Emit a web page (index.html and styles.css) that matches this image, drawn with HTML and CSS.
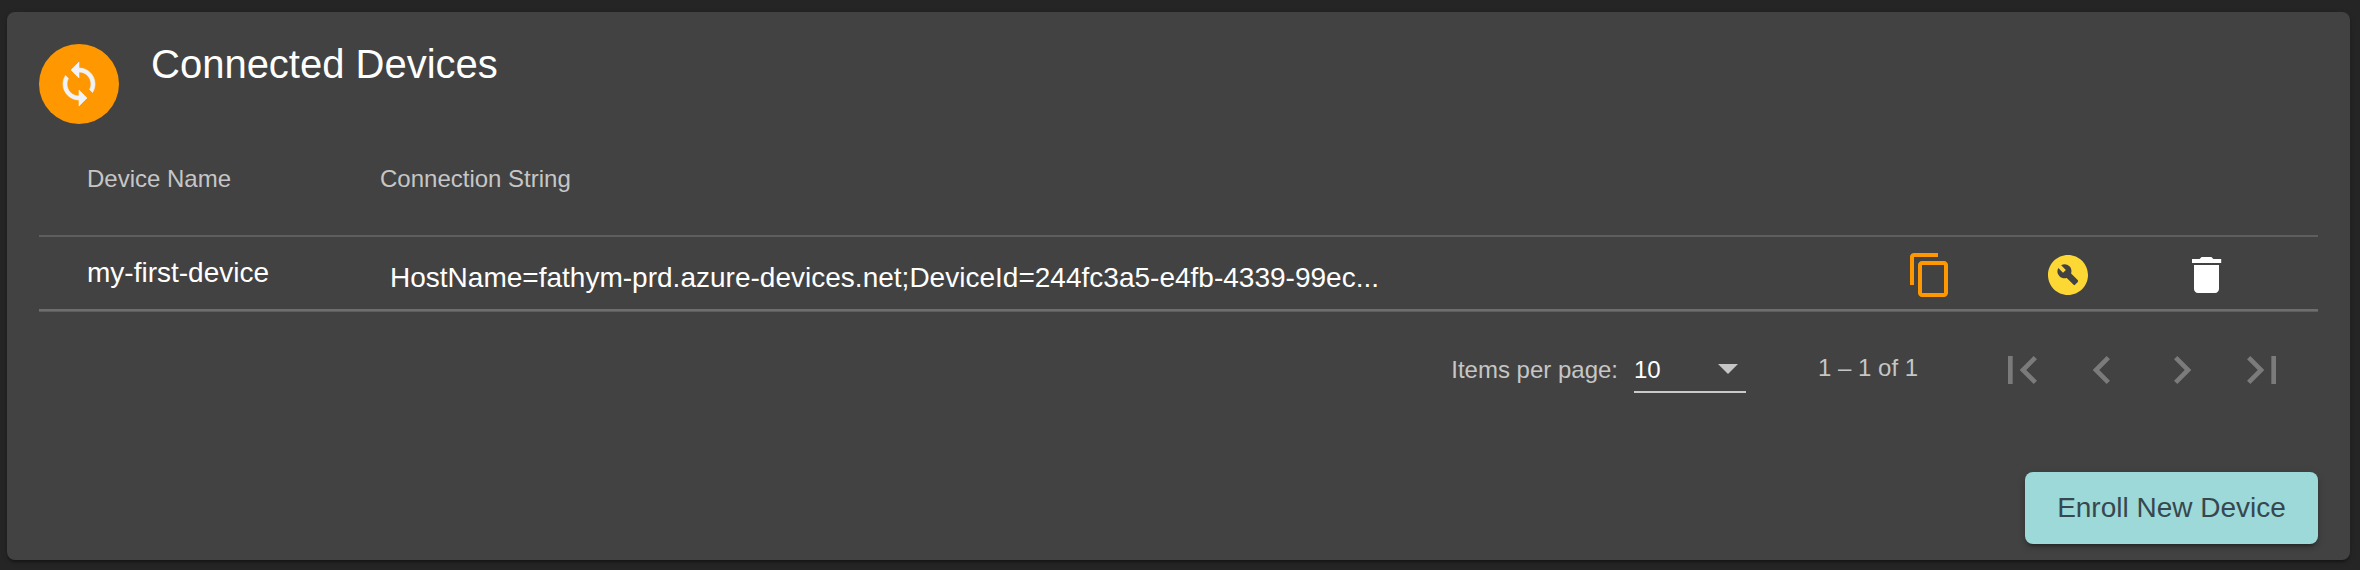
FILE: index.html
```html
<!DOCTYPE html>
<html lang="en">
<head>
<meta charset="utf-8">
<title>Connected Devices</title>
<link rel="stylesheet" href="styles.css">
</head>
<body>
<main class="card">
  <header class="card-header">
    <div class="avatar">
      <svg width="48" height="48" viewBox="0 0 24 24"><path d="M12 4V1L8 5l4 4V6c3.31 0 6 2.69 6 6 0 1.01-.25 1.97-.7 2.8l1.46 1.46C19.54 15.03 20 13.57 20 12c0-4.42-3.58-8-8-8zm0 14c-3.31 0-6-2.69-6-6 0-1.01.25-1.97.7-2.8L5.24 7.74C4.46 8.97 4 10.43 4 12c0 4.42 3.58 8 8 8v3l4-4-4-4v3z"/></svg>
    </div>
    <h1 class="title">Connected Devices</h1>
  </header>
  <div class="row row-head">
    <span class="col-name">Device Name</span>
    <span class="col-conn">Connection String</span>
  </div>
  <div class="row row-item">
    <span class="col-name">my-first-device</span>
    <span class="col-conn">HostName=fathym-prd.azure-devices.net;DeviceId=244fc3a5-e4fb-4339-99ec...</span>
    <div class="actions">
      <svg class="copy" width="48" height="48" viewBox="0 0 24 24"><path d="M16 1H4c-1.1 0-2 .9-2 2v14h2V3h12V1zm3 4H8c-1.1 0-2 .9-2 2v14c0 1.1.9 2 2 2h11c1.1 0 2-.9 2-2V7c0-1.1-.9-2-2-2zm0 16H8V7h11v14z"/></svg>
      <svg class="build" width="48" height="48" viewBox="0 0 24 24"><path fill-rule="evenodd" d="M12 2C6.48 2 2 6.48 2 12s4.48 10 10 10 10-4.48 10-10S17.52 2 12 2zm4.9 13.49l-1.4 1.4a.5.5 0 0 1-.71 0l-3.41-3.41c-1.22.43-2.64.17-3.62-.81a3.5 3.5 0 0 1-.59-4.17l2.35 2.35 1.41-1.41-2.35-2.35c1.32-.77 3.03-.59 4.16.54.98.98 1.24 2.4.81 3.62l3.41 3.41c.14.24.14.63-.06.83z"/></svg>
      <svg class="delete" width="48" height="48" viewBox="0 0 24 24"><path d="M6 19c0 1.1.9 2 2 2h8.500c1.100 0 2-.9 2-2V7H6v12zM19.600 4h-3.900l-1-1H9.800l-1 1H5v2h14.600V4z"/></svg>
    </div>
  </div>
  <div class="pager">
    <span class="pager-label">Items per page:</span>
    <div class="select"><span class="select-value">10</span><i class="caret"></i></div>
    <span class="range">1 – 1 of 1</span>
    <div class="pager-nav">
      <svg width="56" height="56" viewBox="0 0 24 24"><path d="M18.41 16.59L13.82 12l4.59-4.59L17 6l-6 6 6 6zM6 6h2v12H6z"/></svg>
      <svg width="56" height="56" viewBox="0 0 24 24"><path d="M15.41 7.41L14 6l-6 6 6 6 1.41-1.410L10.83 12z"/></svg>
      <svg width="56" height="56" viewBox="0 0 24 24"><path d="M10 6L8.590 7.410 13.170 12l-4.580 4.590L10 18l6-6z"/></svg>
      <svg width="56" height="56" viewBox="0 0 24 24"><path d="M5.590 7.410L10.180 12l-4.590 4.590L7 18l6-6-6-6zM16 6h2v12h-2z"/></svg>
    </div>
  </div>
  <footer class="card-footer"><button class="enroll">Enroll New Device</button></footer>
</main>
</body>
</html>
```
FILE: styles.css
```css
* { box-sizing: border-box; }
body {
  margin: 0;
  height: 570px;
  padding: 12px 10px 10px 7px;
  overflow: hidden;
  background: #252525;
  font-family: "Liberation Sans", Arial, sans-serif;
  color: #fff;
}
svg { display: block; fill: currentColor; flex: none; }
.card {
  height: 548px;
  padding: 32px 32px 16px;
  border-radius: 8px;
  background: #424242;
  box-shadow: 0 4px 2px -2px rgba(0,0,0,.2), 0 2px 2px rgba(0,0,0,.14), 0 2px 6px rgba(0,0,0,.12);
}
.card-header { display: flex; align-items: flex-start; height: 80px; }
.avatar {
  display: grid;
  place-items: center;
  width: 80px;
  height: 80px;
  border-radius: 50%;
  background: #ff9800;
  color: #eff3f8;
}
.avatar svg { stroke: currentColor; stroke-width: .3; }
.title { margin: 0 0 0 32px; font-size: 40px; line-height: 40px; font-weight: 400; white-space: nowrap; }
.row { display: flex; padding-left: 48px; white-space: nowrap; }
.row-head {
  height: 113px;
  padding-top: 39px;
  border-bottom: 2px solid #5e5e5e;
  font-size: 24px;
  line-height: 32px;
  color: #c6c6c6;
}
.col-name { width: 293px; flex: none; }
.row-item {
  height: 74px;
  margin-bottom: 1px;
  padding-top: 20px;
  border-bottom: 2px solid #6e6e6e;
  box-shadow: 0 1px 0 #5e5e5e;
  font-size: 28px;
  line-height: 32px;
}
.row-item .col-conn { padding: 5px 0 0 10px; letter-spacing: .01px; }
.actions { display: flex; gap: 90px; margin: -6px 88px 0 auto; }
.copy { color: #ff9800; }
.build { color: #fdd835; }
.delete { color: #fff; }
.pager {
  display: flex;
  justify-content: flex-end;
  height: 160px;
  padding-top: 30px;
  font-size: 24px;
  line-height: 32px;
  color: #c6c6c6;
  white-space: nowrap;
}
.pager-label { margin: 12px 16px 0 0; }
.select {
  display: flex;
  justify-content: space-between;
  width: 112px;
  height: 51px;
  padding: 12px 8px 0 0;
  border-bottom: 2px solid #cbc9cb;
  color: #fff;
}
.caret { width: 20px; height: 10px; margin-top: 10px; background: #c6c6c6; clip-path: polygon(0 0, 100% 0, 50% 100%); }
.range { margin: 10px 0 0 72px; width: 98px; }
.pager-nav { display: flex; gap: 24px; margin: 0 28px 0 78px; color: #7b7b7b; }
.card-footer { display: flex; justify-content: flex-end; }
.enroll {
  width: 293px;
  height: 72px;
  padding: 0;
  border: 0;
  border-radius: 8px;
  background: #9cd9d8;
  color: #37474f;
  font: 28px/72px "Liberation Sans", Arial, sans-serif;
  box-shadow: 0 6px 2px -4px rgba(0,0,0,.2), 0 4px 4px rgba(0,0,0,.14), 0 2px 10px rgba(0,0,0,.12);
}
```
